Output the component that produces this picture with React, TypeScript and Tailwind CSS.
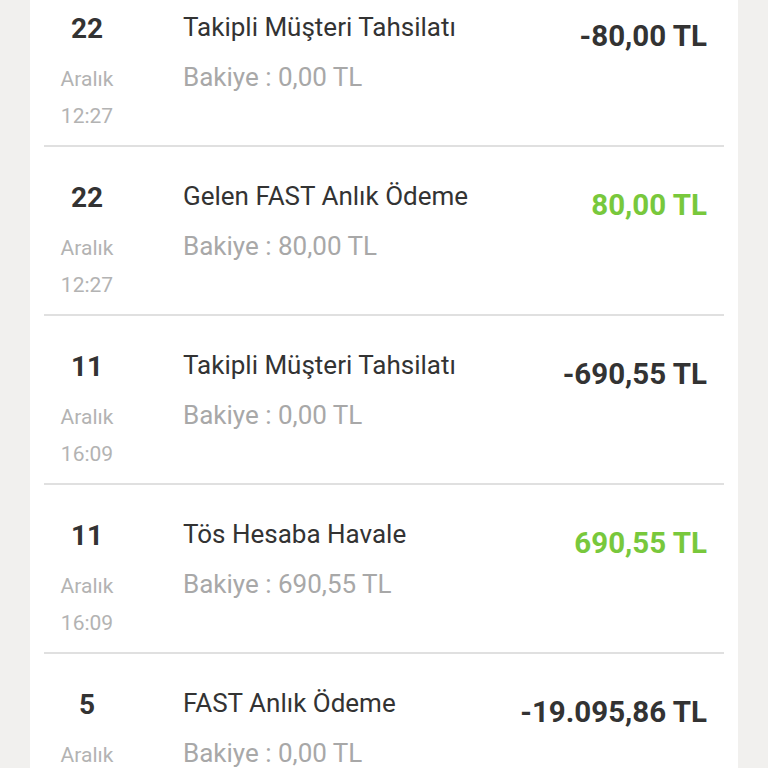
import React from "react";

type Tx = { day: string; time: string; title: string; balance: string; amount: string; positive: boolean };

const rows: Tx[] = [
  { day: "22", time: "12:27", title: "Takipli Müşteri Tahsilatı", balance: "Bakiye : 0,00 TL", amount: "-80,00 TL", positive: false },
  { day: "22", time: "12:27", title: "Gelen FAST Anlık Ödeme", balance: "Bakiye : 80,00 TL", amount: "80,00 TL", positive: true },
  { day: "11", time: "16:09", title: "Takipli Müşteri Tahsilatı", balance: "Bakiye : 0,00 TL", amount: "-690,55 TL", positive: false },
  { day: "11", time: "16:09", title: "Tös Hesaba Havale", balance: "Bakiye : 690,55 TL", amount: "690,55 TL", positive: true },
  { day: "5", time: "", title: "FAST Anlık Ödeme", balance: "Bakiye : 0,00 TL", amount: "-19.095,86 TL", positive: false },
];

export default function App() {
  return (
    <div className="w-[768px] h-[768px] overflow-hidden bg-[#f1f0ee] flex justify-center" style={{ fontFamily: "Roboto, 'Noto Sans', sans-serif" }}>
      <div className="w-[708px] h-full bg-white overflow-hidden px-[14px]">
        <div className="-mt-[22px] flex flex-col">
          {rows.map((r, i) => (
            <div key={i} className="flex h-[169px] shrink-0 border-b-2 border-[#e0e0e0]">
              <div className="w-[86px] flex flex-col items-center pt-[31px]">
                <div className="text-[28px] leading-[40px] font-bold text-[#333333]">{r.day}</div>
                <div className="mt-[12px] text-[21px] leading-[37px] text-[#b3b3b3]">Aralık</div>
                <div className="text-[21px] leading-[37px] text-[#b3b3b3]">{r.time || "00:00"}</div>
              </div>
              <div className="ml-[53px] flex-1 flex flex-col pt-[31px]">
                <div className="text-[26px] leading-[36px] text-[#333333]">{r.title}</div>
                <div className="mt-[14px] text-[26px] leading-[36px] text-[#a8a8a8]">{r.balance}</div>
              </div>
              <div className="pr-[17px] pt-[38px]">
                <div className={`text-[29.5px] leading-[40px] font-bold ${r.positive ? "text-[#78c83c]" : "text-[#333333]"}`}>{r.amount}</div>
              </div>
            </div>
          ))}
        </div>
      </div>
    </div>
  );
}
